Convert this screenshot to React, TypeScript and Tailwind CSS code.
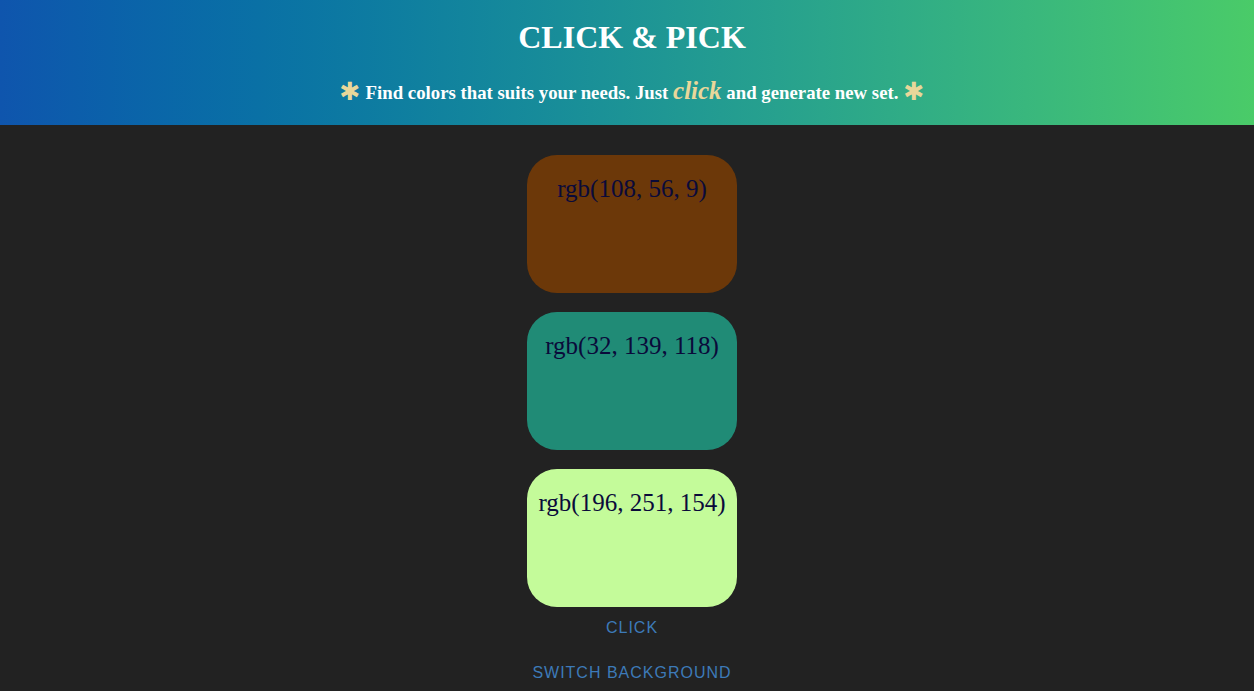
import React from "react";

const colors = ["rgb(108, 56, 9)", "rgb(32, 139, 118)", "rgb(196, 251, 154)"];

export default function App() {
  return (
    <div className="min-h-[691px] bg-[#222222]" style={{ fontFamily: '"Liberation Serif", serif' }}>
      <header className="h-[125px] bg-gradient-to-r from-[#0f55ad] to-[#4acb68] flex flex-col items-center text-white pl-[10px]">
        <h1 className="mt-[18px] text-[32px] leading-[38px] font-bold">CLICK &amp; PICK</h1>
        <p className="mt-[20px] flex items-baseline text-[18.8px] font-bold leading-[30px]">
          <span
            className="text-[#e9d79a] text-[25px] leading-none mr-[5px] relative top-[1px]"
            style={{ fontFamily: '"DejaVu Sans", sans-serif' }}
          >
            ✱
          </span>
          Find colors that suits your needs. Just&nbsp;
          <span className="italic text-[#e9d79a] text-[25px]">click</span>
          &nbsp;and generate new set.
          <span
            className="text-[#e9d79a] text-[25px] leading-none ml-[5px] relative top-[1px]"
            style={{ fontFamily: '"DejaVu Sans", sans-serif' }}
          >
            ✱
          </span>
        </p>
      </header>
      <main className="flex flex-col items-center pt-[30px] pl-[10px]">
        <div className="flex flex-col gap-[19px]">
          {colors.map((c) => (
            <div
              key={c}
              className="w-[210px] h-[138px] rounded-[30px] flex justify-center pt-[20px] text-[25px] leading-[28px] text-[#0a0a3a]"
              style={{ backgroundColor: c }}
            >
              {c}
            </div>
          ))}
        </div>
        <button
          className="mt-[11px] text-[16px] tracking-[1px] text-[#3d7ab8] leading-[20px]"
          style={{ fontFamily: '"Liberation Sans", Arial, sans-serif' }}
        >
          CLICK
        </button>
        <button
          className="mt-[25px] text-[16px] tracking-[1px] text-[#3d7ab8] leading-[20px]"
          style={{ fontFamily: '"Liberation Sans", Arial, sans-serif' }}
        >
          SWITCH BACKGROUND
        </button>
      </main>
    </div>
  );
}
